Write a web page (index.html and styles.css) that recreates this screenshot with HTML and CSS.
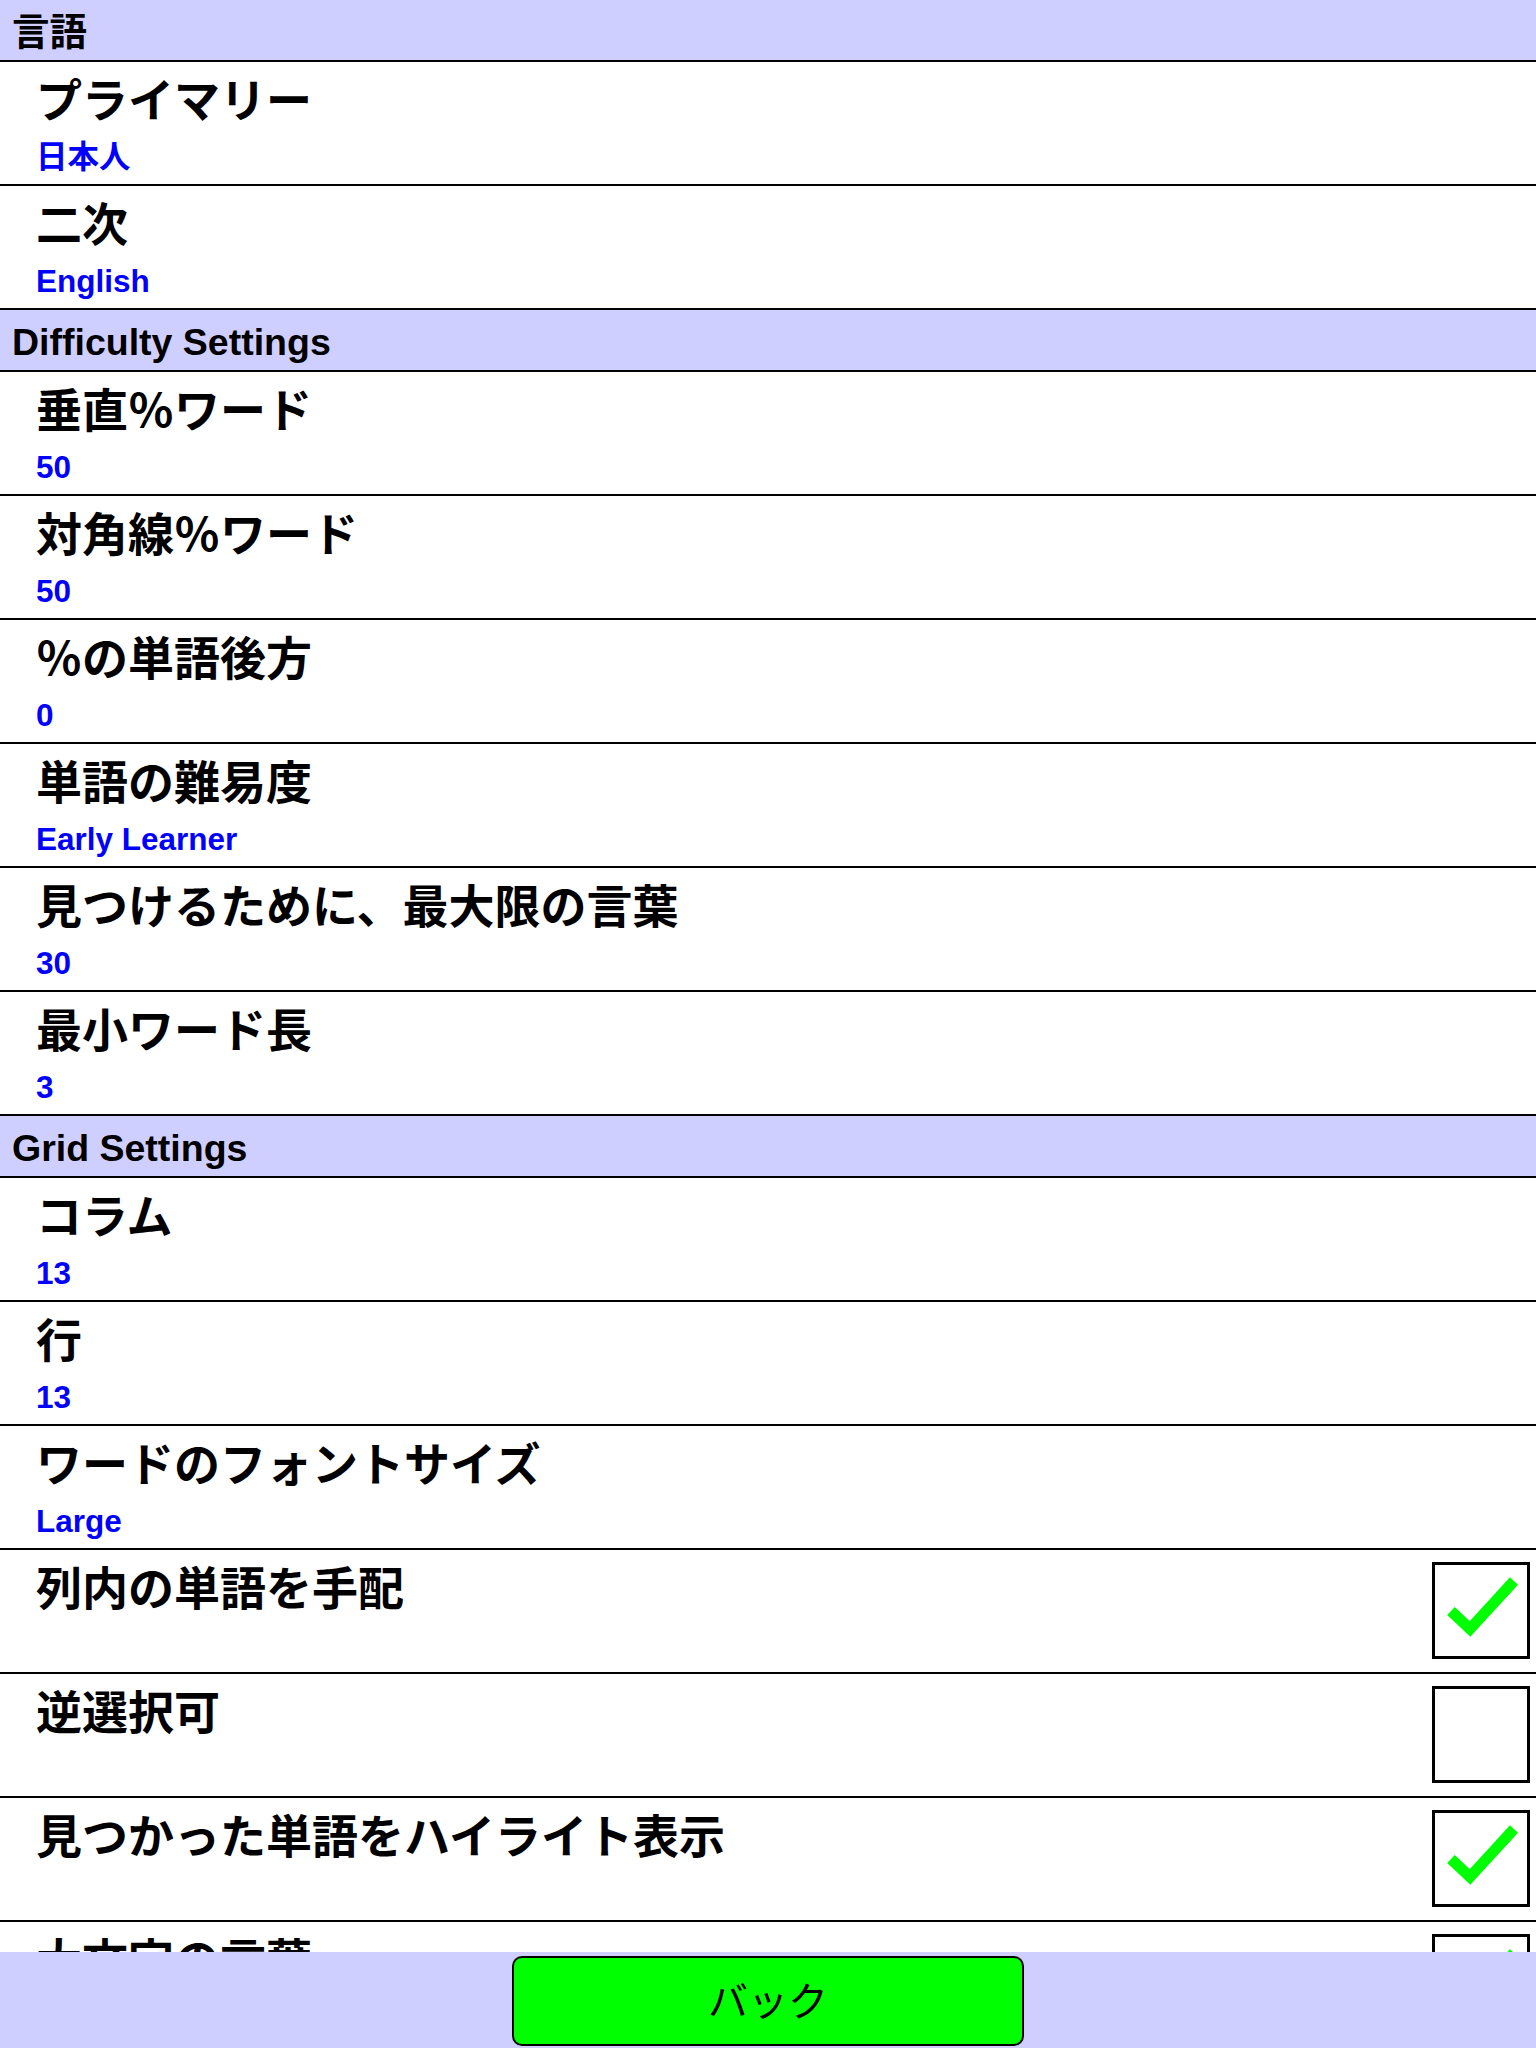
FILE: index.html
```html
<!DOCTYPE html>
<html lang="ja">
<head>
<meta charset="utf-8">
<title>設定</title>
<link rel="stylesheet" href="styles.css">
</head>
<body>
<div class="list">
  <div class="section-header">言語</div>
  <div class="row"><div class="row-text"><div class="label">プライマリー</div><div class="value">日本人</div></div></div>
  <div class="row"><div class="row-text"><div class="label">二次</div><div class="value">English</div></div></div>

  <div class="section-header">Difficulty Settings</div>
  <div class="row"><div class="row-text"><div class="label">垂直％ワード</div><div class="value">50</div></div></div>
  <div class="row"><div class="row-text"><div class="label">対角線％ワード</div><div class="value">50</div></div></div>
  <div class="row"><div class="row-text"><div class="label">％の単語後方</div><div class="value">0</div></div></div>
  <div class="row"><div class="row-text"><div class="label">単語の難易度</div><div class="value">Early Learner</div></div></div>
  <div class="row"><div class="row-text"><div class="label">見つけるために、最大限の言葉</div><div class="value">30</div></div></div>
  <div class="row"><div class="row-text"><div class="label">最小ワード長</div><div class="value">3</div></div></div>

  <div class="section-header">Grid Settings</div>
  <div class="row"><div class="row-text"><div class="label">コラム</div><div class="value">13</div></div></div>
  <div class="row"><div class="row-text"><div class="label">行</div><div class="value">13</div></div></div>
  <div class="row"><div class="row-text"><div class="label">ワードのフォントサイズ</div><div class="value">Large</div></div></div>
  <div class="row">
    <div class="row-text"><div class="label">列内の単語を手配</div></div>
    <span class="checkbox"><svg class="tick" viewBox="0 0 92 91" width="92" height="91"><polyline points="16,46 35,64 79,16"/></svg></span>
  </div>
  <div class="row">
    <div class="row-text"><div class="label">逆選択可</div></div>
    <span class="checkbox"></span>
  </div>
  <div class="row">
    <div class="row-text"><div class="label">見つかった単語をハイライト表示</div></div>
    <span class="checkbox"><svg class="tick" viewBox="0 0 92 91" width="92" height="91"><polyline points="16,46 35,64 79,16"/></svg></span>
  </div>
  <div class="row">
    <div class="row-text"><div class="label">大文字の言葉</div></div>
    <span class="checkbox"><svg class="tick" viewBox="0 0 92 91" width="92" height="91"><polyline points="16,46 35,64 79,16"/></svg></span>
  </div>
</div>
<div class="bottom-bar">
  <button class="back-btn">バック</button>
</div>
</body>
</html>
```

FILE: styles.css
```css
* {
  box-sizing: border-box;
}

html, body {
  margin: 0;
  padding: 0;
  height: 2048px;
  overflow: hidden;
  background: #ffffff;
}

body {
  font-family: "Liberation Sans", "Noto Sans CJK JP", sans-serif;
  color: #000000;
}

.list {
  display: flex;
  flex-direction: column;
}

.section-header {
  height: 62px;
  padding: 4px 0 0 12px;
  background: #cfcfff;
  border-bottom: 2px solid #000000;
  font-size: 37.5px;
  font-weight: 700;
  line-height: 56px;
  white-space: nowrap;
}

.row {
  height: 124px;
  display: flex;
  justify-content: space-between;
  align-items: flex-start;
  padding: 0 6px 0 36px;
  border-bottom: 2px solid #000000;
  background: #ffffff;
}

.row-text {
  display: flex;
  flex-direction: column;
}

.label {
  margin-top: 12px;
  font-family: "Noto Sans CJK JP", sans-serif;
  font-size: 46px;
  font-weight: 700;
  line-height: 46px;
  white-space: nowrap;
}

.value {
  margin-top: 22px;
  font-size: 31.5px;
  font-weight: 700;
  line-height: 31px;
  color: #0000ff;
  white-space: nowrap;
}

.checkbox {
  margin-top: 12px;
  width: 98px;
  height: 97px;
  border: 3px solid #000000;
  background: #ffffff;
  display: block;
  flex: none;
}

.tick {
  display: block;
}

.tick polyline {
  fill: none;
  stroke: #00ff00;
  stroke-width: 11;
  stroke-linejoin: miter;
  stroke-linecap: butt;
}

.bottom-bar {
  position: fixed;
  left: 0;
  right: 0;
  bottom: 0;
  height: 96px;
  background: #cfcfff;
  display: flex;
  justify-content: center;
  align-items: flex-start;
  padding-top: 4px;
}

.back-btn {
  width: 512px;
  height: 90px;
  background: #00ff00;
  border: 2px solid #000000;
  border-radius: 10px;
  font-family: "Noto Sans CJK JP", sans-serif;
  font-size: 40px;
  font-weight: 400;
  line-height: 40px;
  color: #000000;
  padding: 0 0 4px 0;
  cursor: pointer;
}
```
